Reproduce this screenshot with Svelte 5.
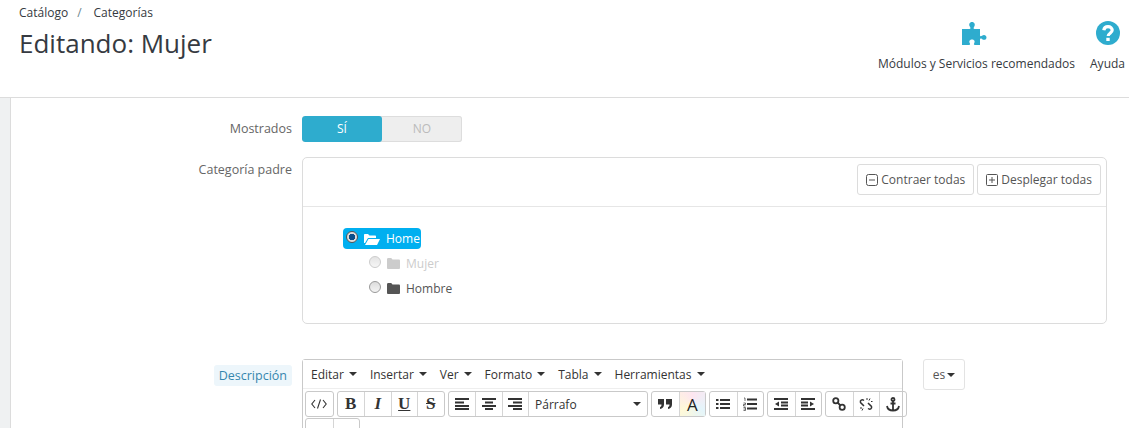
<script>
  const menus = ['Editar','Insertar','Ver','Formato','Tabla','Herramientas'];
</script>

<div class="page">
  <header class="head">
    <div class="titles">
      <div class="crumbs"><span>Catálogo</span><i>/</i><span>Categorías</span></div>
      <h1>Editando: Mujer</h1>
    </div>
    <div class="actions">
      <div class="action">
        <svg width="28" height="26" viewBox="0 0 28 26"><path fill="#2eacce" d="M0 9h7.500c1.500 0 1-1.500.3-2.500C6.500 4.500 7.500 2 10 2s3.500 2.500 2.300 4.500c-.7 1-1.200 2.500.3 2.500H18v6.200c0 1.300 1.200 1.300 2 .6 1.700-1.500 4.500-.8 4.500 1.700S21.700 20.500 20 19c-.8-.7-2-.7-2 .6V25h-5c-1.300 0-1.300-1-.7-2 1-1.700-.2-3.500-2.300-3.500s-3.300 1.800-2.300 3.500c.6 1 .6 2-.7 2H0z"/></svg>
        <span>Módulos y Servicios recomendados</span>
      </div>
      <div class="action">
        <svg width="26" height="26" viewBox="0 0 26 26"><circle cx="13" cy="13" r="12" fill="#2eacce"/><path fill="none" stroke="#fff" stroke-width="3.200" d="M8.800 10.200c.3-2.300 2-3.500 4.200-3.500 2.500 0 4.200 1.400 4.200 3.400 0 1.500-.8 2.300-2 3.100-1.200.8-2 1.300-2 2.900"/><rect x="11.300" y="17.800" width="3.400" height="3.200" fill="#fff"/></svg>
        <span>Ayuda</span>
      </div>
    </div>
  </header>

  <main class="body">
    <section class="content">
      <div class="row r1">
        <label>Mostrados</label>
        <div class="switch"><span class="on">SÍ</span><span class="off">NO</span></div>
      </div>

      <div class="row r2">
        <label>Categoría padre</label>
        <div class="tree">
          <div class="tree-head">
            <button><svg width="12" height="12" viewBox="0 0 12 12"><rect x=".5" y=".5" width="11" height="11" rx="2" fill="none" stroke="#555"/><path d="M3 6h6" stroke="#555"/></svg>Contraer todas</button>
            <button><svg width="12" height="12" viewBox="0 0 12 12"><rect x=".5" y=".5" width="11" height="11" rx="1" fill="none" stroke="#555"/><path d="M3 6h6M6 3v6" stroke="#555"/></svg>Desplegar todas</button>
          </div>
          <div class="tree-body">
            <div class="node home">
              <span class="radio checked"></span>
              <svg width="16" height="12" viewBox="0 0 16 12"><path fill="#fff" d="M0 10V2c0-.6.4-1 1-1h3l1.500 1.500H11c.6 0 1 .4 1 1V5H4L1 10zM4.500 6H16l-3 6H1z"/></svg>
              <span>Home</span>
            </div>
            <div class="node child muted">
              <span class="radio"></span>
              <svg width="13" height="11" viewBox="0 0 13 11"><path fill="#ccc" d="M0 1.500C0 .7.500 0 1.200 0h3l1.300 1.500h6.300c.7 0 1.200.5 1.200 1.200v7c0 .7-.5 1.300-1.200 1.300H1.200C.5 11 0 10.500 0 9.700z"/></svg>
              <span>Mujer</span>
            </div>
            <div class="node child">
              <span class="radio dark"></span>
              <svg width="13" height="11" viewBox="0 0 13 11"><path fill="#555" d="M0 1.500C0 .7.500 0 1.200 0h3l1.300 1.500h6.300c.7 0 1.200.5 1.200 1.200v7c0 .7-.5 1.300-1.200 1.300H1.200C.5 11 0 10.500 0 9.700z"/></svg>
              <span>Hombre</span>
            </div>
          </div>
        </div>
      </div>

      <div class="row r3">
        <label><span class="hint">Descripción</span></label>
        <div class="editor">
          <div class="menubar">
            {#each menus as m}<span class="menu">{m}<b class="caret"></b></span>{/each}
          </div>
          <div class="toolbar">
            <div class="grp"><span class="tb"><svg width="16" height="10" viewBox="0 0 16 10"><path d="M4 1 0.800 5 4 9M12 1l3.200 4L12 9M9.500 .5 6.500 9.500" fill="none" stroke="#333" stroke-width="1.100"/></svg></span></div>
            <div class="grp">
              <span class="tb f b">B</span><span class="tb f it">I</span><span class="tb f u">U</span><span class="tb f s">S</span>
            </div>
            <div class="grp">
              <span class="tb"><svg width="14" height="12" viewBox="0 0 14 12"><path d="M0 1h14M0 4.500h9M0 8h14M0 11h14" stroke="#333" stroke-width="2" transform="translate(0 0)"/></svg></span>
              <span class="tb"><svg width="14" height="12" viewBox="0 0 14 12"><path d="M0 1h14M3 4.500h8M0 8h14M3 11h8" stroke="#333" stroke-width="2"/></svg></span>
              <span class="tb"><svg width="14" height="12" viewBox="0 0 14 12"><path d="M0 1h14M5 4.500h9M0 8h14M5 11h9" stroke="#333" stroke-width="2"/></svg></span>
              <span class="tb select">Párrafo<b class="caret"></b></span>
            </div>
            <div class="grp">
              <span class="tb"><svg width="14" height="10" viewBox="0 0 14 10"><path fill="#333" d="M0 0h6v5.500C6 8 4.500 9.500 2 10V8c1-.3 1.500-1 1.500-2.500H0zM8 0h6v5.500c0 2.500-1.500 4-4 4.500V8c1-.3 1.500-1 1.500-2.500H8z"/></svg></span>
              <span class="tb color"><em>A</em></span>
            </div>
            <div class="grp">
              <span class="tb"><svg width="14" height="12" viewBox="0 0 14 12"><path d="M0 2h2.500M4 2h10M0 6h2.500M4 6h10M0 10h2.500M4 10h10" stroke="#333" stroke-width="2"/></svg></span>
              <span class="tb"><svg width="14" height="14" viewBox="0 0 14 14"><path d="M4 2.500h10M4 7h10M4 11.500h10" stroke="#333" stroke-width="2"/><path d="M1 1h1v3M.5 6h2v1.500h-2V9h2M.5 10.500h2v3h-2M.5 12h2" fill="none" stroke="#333" stroke-width=".7"/></svg></span>
            </div>
            <div class="grp">
              <span class="tb"><svg width="14" height="12" viewBox="0 0 14 12"><path d="M0 1h14M7 4.500h7M7 7.500h7M0 11h14" stroke="#333" stroke-width="2"/><path d="M5 3.500v5L1 6z" fill="#333"/></svg></span>
              <span class="tb"><svg width="14" height="12" viewBox="0 0 14 12"><path d="M0 1h14M0 4.500h7M0 7.500h7M0 11h14" stroke="#333" stroke-width="2"/><path d="M9 3.500v5L13 6z" fill="#333"/></svg></span>
            </div>
            <div class="grp">
              <span class="tb"><svg width="14" height="14" viewBox="0 0 14 14"><g fill="none" stroke="#333" stroke-width="1.800"><circle cx="3.800" cy="3.800" r="2.600"/><circle cx="10.200" cy="10.200" r="2.600"/><path d="M5.500 5.500l3 3"/></g></svg></span>
              <span class="tb"><svg width="14" height="15" viewBox="0 0 14 15"><g fill="none" stroke="#333" stroke-width="1.500"><path d="M5 3.500C3 2 .8 3.500 1.500 5.500L5 9"/><path d="M9 6l3.500 3.500c.7 2-1.500 3.500-3.500 2"/><path d="M8 1v2M11 1.500l-1 2M12 4.500h1.500M1 11h2M3 13.500l1-2" stroke-width="1"/></g></svg></span>
              <span class="tb"><svg width="14" height="15" viewBox="0 0 14 15"><g fill="none" stroke="#333" stroke-width="1.800"><circle cx="7" cy="2.500" r="1.500"/><path d="M7 4v10M4.500 6.500h5M1 9c.5 3 3 4.500 6 4.500s5.500-1.500 6-4.500"/></g></svg></span>
            </div>
          </div>
          <div class="toolbar second">
            <div class="grp"><span class="tb"></span><span class="tb"></span></div>
          </div>
        </div>
        <span class="lang">es<b class="caret"></b></span>
      </div>
    </section>
  </main>
</div>

<style>
  :global(body) { margin: 0; background: #fff; }
  .page { width: 1129px; height: 428px; overflow: hidden; font-family: "Open Sans", sans-serif; font-size: 12px; color: #555; display: flex; flex-direction: column; background: #fff; }
  .head { height: 97px; flex: none; border-bottom: 1px solid #dcdcdc; display: flex; justify-content: space-between; box-sizing: content-box; }
  .titles { padding: 5px 0 0 19px; }
  .crumbs { color: #363a41; line-height: 16px; display: flex; }
  .crumbs i { font-style: normal; color: #6c868e; margin: 0 12px 0 9px; }
  h1 { margin: 4px 0 0; font-size: 26px; font-weight: 400; line-height: 36px; color: #363a41; }
  .actions { display: flex; gap: 15px; padding: 20px 4px 0 0; }
  .action { display: flex; flex-direction: column; align-items: center; gap: 9px; color: #363a41; line-height: 17px; }
  .body { flex: 1; min-height: 0; margin-left: 10px; border-left: 1px solid #dcdcdc; box-shadow: -10px 0 0 #eff1f2; background: #fff; }
  .content { padding-top: 18px; margin-right: 22px; }
  .row { display: grid; grid-template-columns: 281px auto; column-gap: 10px; }
  label { text-align: right; color: #666; font-size: 12.500px; line-height: 26px; }
  .switch { width: 160px; height: 26px; display: flex; border-radius: 3px; overflow: hidden; background: #eee; box-shadow: inset 0 0 0 1px #ddd; text-align: center; font-size: 12px; line-height: 26px; }
  .switch span { width: 80px; }
  .on { background: #2eacce; color: #fff; border-radius: 3px; }
  .off { color: #bbb; }
  .r2 { margin-top: 15px; }
  .tree { border: 1px solid #dcdcdc; border-radius: 5px; height: 167px; box-sizing: border-box; }
  .tree-head { height: 42px; padding: 6px 5px 0 0; display: flex; justify-content: flex-end; gap: 3px; border-bottom: 1px solid #e6e6e6; box-sizing: content-box; }
  button { all: unset; box-sizing: border-box; height: 31px; padding: 0 8px; border: 1px solid #dcdcdc; border-radius: 3px; display: flex; align-items: center; gap: 3px; font-size: 12px; color: #555; }
  .tree-body { padding: 21px 0 0 40px; }
  .node { height: 21px; display: inline-flex; align-items: center; gap: 6px; color: #555; border-radius: 4px; font-size: 12px; }
  .home { background: #00aff0; color: #fff; padding: 0 1px 0 3px; vertical-align: top; }
  .child { display: flex; margin: 4px 0 0 26px; }
  .muted { color: #ccc; }
  .radio { width: 12px; height: 12px; border-radius: 50%; box-sizing: border-box; border: 1px solid #ccc; background: linear-gradient(#e4e4e4, #f6f6f6); margin-top: -3px; }
  .radio.dark { border-color: #999; background: linear-gradient(#ddd, #f4f4f4); }
  .radio.checked { border-color: #555; background: radial-gradient(circle, #0a4f8a 0 3px, #ddd 3.500px); }
  .r3 { margin-top: 35px; grid-template-columns: 281px 601px auto; }
  .hint { background: #edf6fb; color: #3586ae; padding: 2px 5px; border-radius: 3px; }
  .r3 label { line-height: 34px; }
  .editor { border: 1px solid #c9c9c9; border-radius: 3px 3px 0 0; height: 120px; box-sizing: border-box; }
  .menubar { height: 28px; display: flex; align-items: center; gap: 13px; padding-left: 8px; border-bottom: 1px solid #eee; font-size: 12px; color: #333; background: #fff; box-sizing: content-box; }
  .menu { display: inline-flex; align-items: center; }
  .caret { display: inline-block; width: 0; height: 0; border: 4px solid transparent; border-top-color: #333; border-bottom: 0; margin-left: 5px; }
  .toolbar { display: flex; gap: 3px; padding: 2px 0 0 2px; }
  .second { padding-top: 1px; }
  .grp { display: flex; height: 26px; border: 1px solid #c9c9c9; border-radius: 3px; box-sizing: border-box; }
  .tb { width: 26.500px; display: flex; align-items: center; justify-content: center; border-left: 1px solid #d5d5d5; box-sizing: border-box; color: #333; }
  .tb:first-child { border-left: 0; }
  .f { font-family: "Liberation Serif", serif; font-size: 17px; }
  .b { font-weight: 700; }
  .it { font-style: italic; font-weight: 700; }
  .u { text-decoration: underline; font-weight: 700; }
  .s { text-decoration: line-through; font-weight: 700; }
  .select { width: 119px; justify-content: space-between; padding: 0 6px; font-size: 12px; }
  .color { background: conic-gradient(#fde5f0, #e4f5fb, #fff9d8, #fde5f0); }
  .color em { font-style: normal; font-size: 17px; color: #222; }
  .lang { margin-left: 10px; width: 42px; height: 31px; border: 1px solid #e3e3e3; border-radius: 3px; display: flex; align-items: center; justify-content: center; font-size: 12px; box-sizing: border-box; }
  .lang .caret { margin-left: 2px; }
</style>
